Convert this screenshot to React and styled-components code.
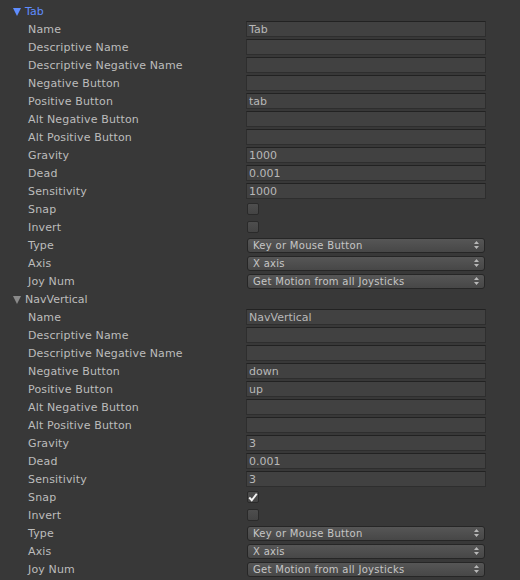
import React from 'react'
import styled, { createGlobalStyle } from 'styled-components'

const Global = createGlobalStyle`
  html, body {
    margin: 0;
    background: #383838;
  }
  body {
    font-family: "DejaVu Sans", "Liberation Sans", sans-serif;
    font-size: 11px;
    color: #bcbcbc;
  }
`

const Panel = styled.div`
  width: 520px;
  height: 580px;
  padding-top: 2px;
  box-sizing: border-box;
  overflow: hidden;
  background: #383838;
`

const Header = styled.div`
  display: flex;
  align-items: center;
  height: 18px;
  padding-left: 13px;
  gap: 4px;
  color: ${p => (p.active ? '#5f8dff' : '#bcbcbc')};
`

const Arrow = styled.span`
  width: 0;
  height: 0;
  border-left: 4px solid transparent;
  border-right: 4px solid transparent;
  border-top: 8px solid ${p => (p.active ? '#5f8dff' : '#8a8a8a')};
  margin-top: 1px;
`

const Row = styled.div`
  display: grid;
  grid-template-columns: 218px 240px;
  align-items: center;
  height: 18px;
  padding-left: 28px;
`

const Label = styled.div`
  white-space: nowrap;
  letter-spacing: 0.15px;
`

const Field = styled.div`
  height: 16px;
  box-sizing: border-box;
  background: #414141;
  border: 1px solid #2e2e2e;
  border-top-color: #222222;
  padding-left: 2px;
  line-height: 15px;
  color: #b8b8b8;
`

const Check = styled.div`
  margin-left: 1px;
  width: 12px;
  height: 12px;
  box-sizing: border-box;
  border-radius: 2px;
  background: linear-gradient(#4e4e4e, #444444);
  border: 1px solid #2a2a2a;
  display: flex;
  align-items: center;
  justify-content: center;
`

const Select = styled.div`
  margin-left: 1px;
  width: 238px;
  height: 15px;
  box-sizing: border-box;
  border-radius: 3px;
  border: 1px solid #262626;
  background: linear-gradient(#565656, #474747);
  display: flex;
  align-items: center;
  justify-content: space-between;
  padding: 0 5px 0 5px;
  font-size: 10px;
  color: #c6c6c6;
  letter-spacing: 0.3px;
`

function Updown() {
  return (
    <svg width="5" height="8" viewBox="0 0 5 8">
      <path d="M2.5 0 L5 3 L0 3 Z M0 5 L5 5 L2.5 8 Z" fill="#b8b8b8" />
    </svg>
  )
}

function Tick() {
  return (
    <svg width="12" height="11" viewBox="0 0 12 11">
      <path d="M1.5 5.5 L4.5 8.8 L10.5 1" fill="none" stroke="#f4f4f4" strokeWidth="2.4" />
    </svg>
  )
}

function Axis({ name, active, v }) {
  return (
    <>
      <Header active={active}>
        <Arrow active={active} />
        {name}
      </Header>
      <Row><Label>Name</Label><Field>{name}</Field></Row>
      <Row><Label>Descriptive Name</Label><Field /></Row>
      <Row><Label>Descriptive Negative Name</Label><Field /></Row>
      <Row><Label>Negative Button</Label><Field>{v.neg}</Field></Row>
      <Row><Label>Positive Button</Label><Field>{v.pos}</Field></Row>
      <Row><Label>Alt Negative Button</Label><Field /></Row>
      <Row><Label>Alt Positive Button</Label><Field /></Row>
      <Row><Label>Gravity</Label><Field>{v.gravity}</Field></Row>
      <Row><Label>Dead</Label><Field>0.001</Field></Row>
      <Row><Label>Sensitivity</Label><Field>{v.sens}</Field></Row>
      <Row><Label>Snap</Label><Check>{v.snap && <Tick />}</Check></Row>
      <Row><Label>Invert</Label><Check /></Row>
      <Row><Label>Type</Label><Select>Key or Mouse Button<Updown /></Select></Row>
      <Row><Label>Axis</Label><Select>X axis<Updown /></Select></Row>
      <Row><Label>Joy Num</Label><Select>Get Motion from all Joysticks<Updown /></Select></Row>
    </>
  )
}

export default function App() {
  return (
    <Panel>
      <Global />
      <Axis name="Tab" active v={{ neg: '', pos: 'tab', gravity: '1000', sens: '1000', snap: false }} />
      <Axis name="NavVertical" v={{ neg: 'down', pos: 'up', gravity: '3', sens: '3', snap: true }} />
    </Panel>
  )
}
